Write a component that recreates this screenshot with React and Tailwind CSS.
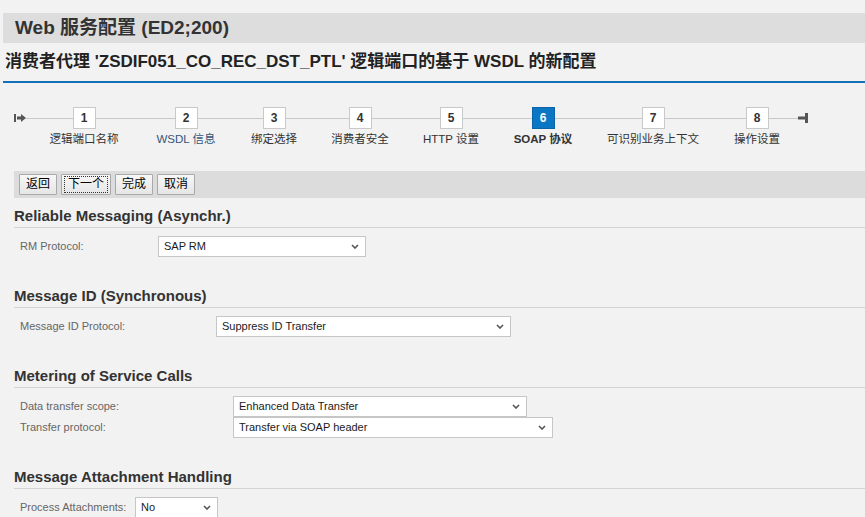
import React from "react";

const steps = [
  { n: 1, label: "逻辑端口名称", w: "w-[80px]", gap: "w-[27px]" },
  { n: 2, label: "WSDL 信息", w: "w-[70px]", gap: "w-[23px]", link: true },
  { n: 3, label: "绑定选择", w: "w-[60px]", gap: "w-[24px]" },
  { n: 4, label: "消费者安全", w: "w-[64px]", gap: "w-[27px]" },
  { n: 5, label: "HTTP 设置", w: "w-[64px]", gap: "w-[28px]" },
  { n: 6, label: "SOAP 协议", w: "w-[64px]", gap: "w-[28px]", active: true },
  { n: 7, label: "可识别业务上下文", w: "w-[100px]", gap: "w-[22px]" },
  { n: 8, label: "操作设置", w: "w-[64px]", gap: "w-[9px]" },
];

function Line({ className }) {
  return (
    <div className={`flex h-[22px] items-center ${className}`}>
      <div className="h-px w-full bg-[#c8c8c8]" />
    </div>
  );
}

function Step({ step }) {
  return (
    <div className={`flex flex-col items-center ${step.w}`}>
      <div className="flex h-[22px] w-full items-center">
        <div className="h-px flex-1 bg-[#c8c8c8]" />
        <div
          className={
            step.active
              ? "flex h-[22px] w-[23px] items-center justify-center border border-[#0b64a8] bg-[#0a76c4] text-[12px] font-bold text-white"
              : "flex h-[22px] w-[23px] items-center justify-center border border-[#c9c9c9] bg-white text-[12px] font-bold text-[#333]"
          }
        >
          {step.n}
        </div>
        <div className="h-px flex-1 bg-[#c8c8c8]" />
      </div>
      <div
        className={
          step.active
            ? "mt-[3px] whitespace-nowrap text-[11.5px] font-bold leading-[14px] text-[#333]"
            : step.link
            ? "mt-[3px] whitespace-nowrap text-[11.5px] leading-[14px] text-[#34557a]"
            : "mt-[3px] whitespace-nowrap text-[11.5px] leading-[14px] text-[#333]"
        }
      >
        {step.label}
      </div>
    </div>
  );
}

function Select({ value, className }) {
  return (
    <div
      className={`flex h-[21px] items-center justify-between border border-[#c6c6c6] bg-white pl-[5px] pr-[6px] text-[11px] text-[#1a1a1a] ${className}`}
    >
      <span>{value}</span>
      <svg width="8" height="5" viewBox="0 0 8 5">
        <path d="M1 1 L4 4 L7 1" fill="none" stroke="#555" strokeWidth="1.6" />
      </svg>
    </div>
  );
}

function Row({ label, labelW, value, selectW }) {
  return (
    <div className="flex items-center">
      <div className={`ml-[6px] text-[11px] text-[#666] ${labelW}`}>{label}</div>
      <Select value={value} className={selectW} />
    </div>
  );
}

function Heading({ children }) {
  return (
    <div className="h-[23px] border-b border-[#d4d4d4] text-[15px] font-bold leading-[22px] text-[#333]">
      {children}
    </div>
  );
}

function Button({ children, focus }) {
  return (
    <div className="flex h-[21px] items-center rounded-[1px] border border-[#a9a9a9] bg-gradient-to-b from-[#f7f7f7] to-[#e6e6e6] px-[2px] text-[12px] text-black">
      <span
        className={
          focus
            ? "border border-dotted border-[#333] px-[3px] leading-[15px]"
            : "border border-transparent px-[3px] leading-[15px]"
        }
      >
        {children}
      </span>
    </div>
  );
}

export default function App() {
  return (
    <div className="min-h-screen bg-[#f2f2f2] pt-[13px] font-['Liberation_Sans','Noto_Sans_CJK_SC',sans-serif]">
      <div className="ml-[3px] flex h-[30px] items-center bg-[#dddddd] pl-[12px] text-[19px] font-bold text-[#333]">
        Web 服务配置 (ED2;200)
      </div>

      <div className="ml-[3px] flex h-[40px] items-center border-b-2 border-[#1471b8] pl-[2px] text-[17px] font-bold text-[#222]">
        消费者代理 'ZSDIF051_CO_REC_DST_PTL' 逻辑端口的基于 WSDL 的新配置
      </div>

      <div className="flex items-start pl-[14px] pt-[24px]">
        <div className="flex h-[22px] w-[12px] items-center">
          <svg width="12" height="10" viewBox="0 0 12 10">
            <rect x="0" y="1" width="2" height="8" fill="#555" />
            <rect x="3" y="3.5" width="4" height="3" fill="#555" />
            <path d="M7 1 L12 5 L7 9 Z" fill="#555" />
          </svg>
        </div>
        <Line className="w-[18px]" />
        {steps.map((s) => (
          <React.Fragment key={s.n}>
            <Step step={s} />
            <Line className={s.gap} />
          </React.Fragment>
        ))}
        <div className="flex h-[22px] items-center">
          <svg width="10" height="10" viewBox="0 0 10 10">
            <rect x="0" y="3.5" width="8" height="3" fill="#555" />
            <rect x="7" y="0" width="3" height="10" fill="#555" />
          </svg>
        </div>
      </div>

      <div className="ml-[14px] mt-[25px] flex h-[27px] items-center gap-[4px] bg-[#dcdcdc] pl-[5px]">
        <Button>返回</Button>
        <Button focus>下一个</Button>
        <Button>完成</Button>
        <Button>取消</Button>
      </div>

      <div className="ml-[14px] mt-[7px]">
        <Heading>Reliable Messaging (Asynchr.)</Heading>
        <div className="mt-[8px] mb-[28px]">
          <Row label="RM Protocol:" labelW="w-[138px]" value="SAP RM" selectW="w-[208px]" />
        </div>

        <Heading>Message ID (Synchronous)</Heading>
        <div className="mt-[8px] mb-[28px]">
          <Row label="Message ID Protocol:" labelW="w-[196px]" value="Suppress ID Transfer" selectW="w-[295px]" />
        </div>

        <Heading>Metering of Service Calls</Heading>
        <div className="mt-[8px] mb-[28px]">
          <Row label="Data transfer scope:" labelW="w-[213px]" value="Enhanced Data Transfer" selectW="w-[294px]" />
          <Row label="Transfer protocol:" labelW="w-[213px]" value="Transfer via SOAP header" selectW="w-[320px]" />
        </div>

        <Heading>Message Attachment Handling</Heading>
        <div className="mt-[8px]">
          <Row label="Process Attachments:" labelW="w-[115px]" value="No" selectW="w-[83px]" />
        </div>
      </div>
    </div>
  );
}
